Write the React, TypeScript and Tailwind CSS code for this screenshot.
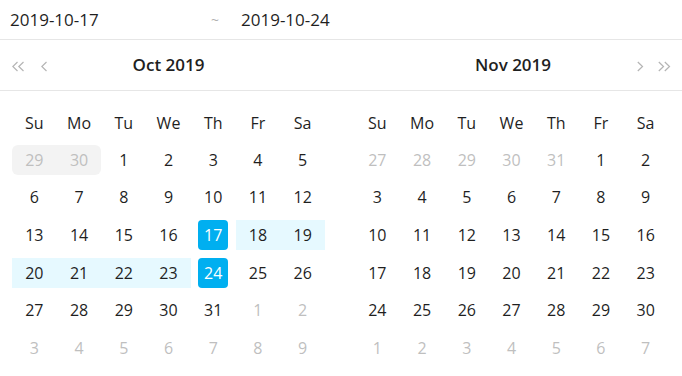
import React from 'react';

type Cell = { day: number; muted?: boolean; state?: 'edge' | 'range' | 'hoverStart' | 'hoverEnd' };

const WEEK = ['Su', 'Mo', 'Tu', 'We', 'Th', 'Fr', 'Sa'];

const buildMonth = (prevTail: number[], count: number, nextCount: number): Cell[] => {
  const cells: Cell[] = prevTail.map((d) => ({ day: d, muted: true }));
  for (let d = 1; d <= count; d++) cells.push({ day: d });
  for (let d = 1; d <= nextCount; d++) cells.push({ day: d, muted: true });
  return cells;
};

const octCells = buildMonth([29, 30], 31, 9).map((c, i): Cell => {
  if (i === 0) return { ...c, state: 'hoverStart' };
  if (i === 1) return { ...c, state: 'hoverEnd' };
  if (!c.muted && (c.day === 17 || c.day === 24)) return { ...c, state: 'edge' };
  if (!c.muted && c.day > 17 && c.day < 24) return { ...c, state: 'range' };
  return c;
});

const novCells = buildMonth([27, 28, 29, 30, 31], 30, 7);

const Chevron = ({ dir, double }: { dir: 'left' | 'right'; double?: boolean }) => {
  const w = double ? 13 : 7;
  const pts = (x: number) =>
    dir === 'left' ? `${x + 5.5},1 ${x + 0.8},5.5 ${x + 5.5},10` : `${x + 0.8},1 ${x + 5.5},5.5 ${x + 0.8},10`;
  return (
    <svg width={w} height={11} viewBox={`0 0 ${w} 11`} fill="none" stroke="#b5b5b5" strokeWidth={1.2}>
      <polyline points={pts(0)} />
      {double && <polyline points={pts(6)} />}
    </svg>
  );
};

const DayCell = ({ cell }: { cell: Cell }) => {
  const color = cell.muted ? 'text-[#bfbfbf]' : 'text-[#1f1f1f]';
  if (cell.state === 'edge') {
    return (
      <div className="h-[37.6px] flex items-center justify-center">
        <div className="w-[30px] h-[30px] rounded-[4px] bg-[#00aff0] text-white flex items-center justify-center">
          {cell.day}
        </div>
      </div>
    );
  }
  let bg = '';
  if (cell.state === 'range') bg = 'bg-[#e6f9ff]';
  if (cell.state === 'hoverStart') bg = 'bg-[#f3f3f3] rounded-l-[6px]';
  if (cell.state === 'hoverEnd') bg = 'bg-[#f3f3f3] rounded-r-[6px]';
  return (
    <div className="h-[37.6px] flex items-center">
      <div className={`w-full h-[30px] flex items-center justify-center ${bg} ${color}`}>{cell.day}</div>
    </div>
  );
};

const MonthGrid = ({ cells }: { cells: Cell[] }) => (
  <div className="w-[313px] grid grid-cols-7 text-[16px] pt-[14px]">
    {WEEK.map((w) => (
      <div key={w} className="h-[36px] flex items-center justify-center text-[#1f1f1f]">
        {w}
      </div>
    ))}
    {cells.map((c, i) => (
      <DayCell key={i} cell={c} />
    ))}
  </div>
);

export default function App() {
  return (
    <div className="w-[682px] h-[376px] bg-white overflow-hidden" style={{ fontFamily: '"Open Sans", "Noto Sans", sans-serif' }}>
      <div className="h-[40px] flex items-center border-b border-[#e6e6e6] text-[17px] text-[#1f1f1f]">
        <span className="pl-[10px] w-[211px]">2019-10-17</span>
        <span className="w-[30px] text-[#b0b0b0] text-[14px]">~</span>
        <span>2019-10-24</span>
      </div>
      <div className="h-[51px] flex items-center border-b border-[#e6e6e6] px-3 gap-[30px]">
        <div className="w-[313px] flex items-center">
          <div className="w-[60px] flex items-center gap-[16px] mt-[2px]">
            <Chevron dir="left" double />
            <Chevron dir="left" />
          </div>
          <div className="flex-1 text-center text-[17px] font-semibold text-[#1f1f1f]">Oct 2019</div>
          <div className="w-[60px]" />
        </div>
        <div className="w-[313px] flex items-center">
          <div className="w-[60px]" />
          <div className="flex-1 text-center text-[17px] font-semibold text-[#1f1f1f]">Nov 2019</div>
          <div className="w-[60px] flex items-center justify-end gap-[14px] -mr-[3px] mt-[2px]">
            <Chevron dir="right" />
            <Chevron dir="right" double />
          </div>
        </div>
      </div>
      <div className="flex px-3 gap-[30px]">
        <MonthGrid cells={octCells} />
        <MonthGrid cells={novCells} />
      </div>
    </div>
  );
}
